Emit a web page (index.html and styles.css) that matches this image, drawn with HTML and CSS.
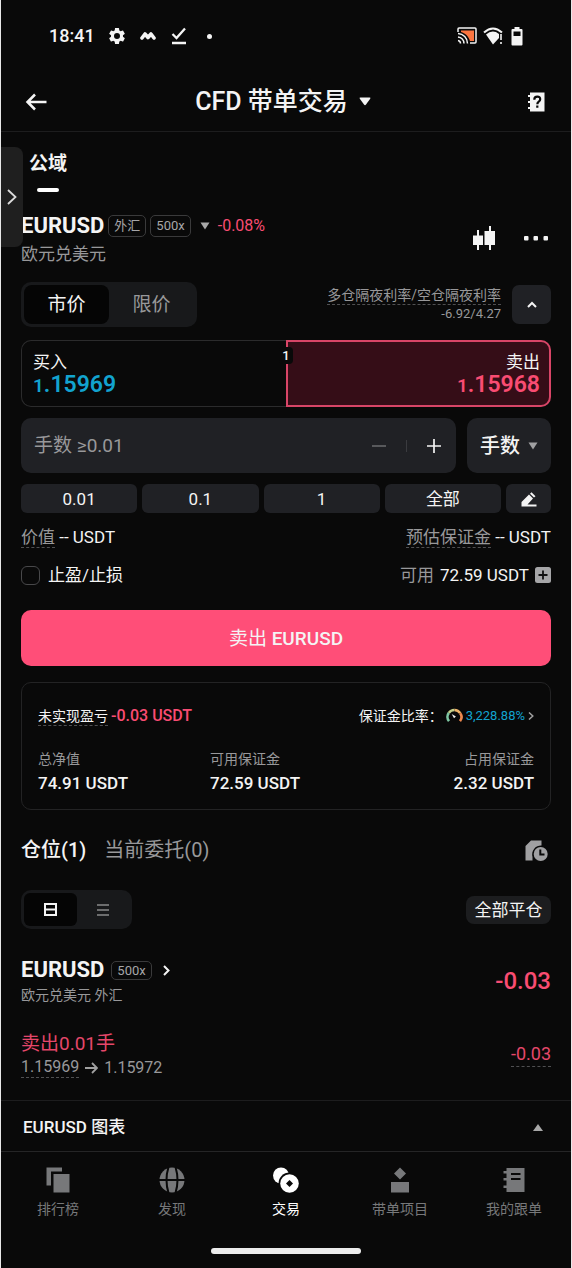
FILE: index.html
```html
<!DOCTYPE html>
<html lang="zh-CN">
<head>
<meta charset="utf-8">
<meta name="viewport" content="width=device-width, initial-scale=1">
<title>CFD 带单交易</title>
<link rel="stylesheet" href="styles.css">
</head>
<body>
<div class="app">
  <div class="status">
    <span class="clock">18:41</span>
    <svg class="st-gear" width="20" height="20" viewBox="0 0 24 24" fill="#f4f4f4"><path d="M19.14 12.94c.04-.3.06-.61.06-.94 0-.32-.02-.64-.07-.94l2.03-1.58a.49.49 0 0 0 .12-.61l-1.92-3.32a.49.49 0 0 0-.59-.22l-2.39.96c-.5-.38-1.03-.7-1.62-.94l-.36-2.54a.48.48 0 0 0-.48-.41h-3.84c-.24 0-.43.17-.47.41l-.36 2.54c-.59.24-1.13.57-1.62.94l-2.39-.96c-.22-.08-.47 0-.59.22L2.74 8.87c-.12.21-.08.47.12.61l2.03 1.58c-.05.3-.09.63-.09.94s.02.64.07.94l-2.03 1.58a.49.49 0 0 0-.12.61l1.92 3.32c.12.22.37.29.59.22l2.39-.96c.5.38 1.03.7 1.62.94l.36 2.54c.05.24.24.41.48.41h3.84c.24 0 .44-.17.47-.41l.36-2.54c.59-.24 1.13-.56 1.62-.94l2.39.96c.22.08.47 0 .59-.22l1.92-3.32c.12-.22.07-.47-.12-.61l-2.01-1.58zM12 15.6A3.6 3.6 0 1 1 12 8.400a3.600 3.600 0 0 1 0 7.200z"/></svg>
    <svg class="st-wave" width="16" height="10" viewBox="0 0 16 10" fill="none" stroke="#f4f4f4" stroke-width="3.600" stroke-linejoin="round" stroke-linecap="round"><path d="M2 7 5 3 8 6.500 11 3 14 7"/></svg>
    <svg class="st-done" width="16" height="18" viewBox="0 0 16 18" fill="none" stroke="#f4f4f4" stroke-width="2.300"><path d="M1.500 7 5.500 11 14 1.500M1 16H15"/></svg>
    <span class="dot"></span>
    <span class="fill"></span>
    <svg class="st-cast" width="20" height="18" viewBox="0 0 20 18" fill="none" stroke="#f4f4f4" stroke-width="1.500"><path d="M4 3.500H17V14H13C11.500 9 8 6 4 5z" fill="#fb7540" stroke="none"/><path d="M1 5V2Q1 1 2 1H18Q19 1 19 2V15Q19 16 18 16H13"/><path d="M1 6.500A10 10 0 0 1 10.500 16.500M1 10A6.500 6.500 0 0 1 7 16.500M1 13.500A3 3 0 0 1 3.500 16.500" stroke-width="1.500"/></svg>
    <svg class="st-wifi" width="20" height="18" viewBox="0 0 20 18"><path d="M1 5.500Q10-2.500 19 5.500" fill="none" stroke="#f4f4f4" stroke-width="2"/><path d="M3 7.500Q9.500 2 16 7V11L10 17.500z" fill="#f4f4f4"/><path d="M18 7V13M18 15V17" stroke="#f4f4f4" stroke-width="1.600"/></svg>
    <svg width="12" height="19" viewBox="0 0 12 19"><path d="M3.500 0h5v2H10.500Q11.500 2 11.500 3V17.500Q11.500 18.500 10.500 18.500H1.500Q.5 18.500.5 17.500V3Q.5 2 1.500 2H3.500zM2.500 4.500V9H9.500V4.500z" fill="#f4f4f4" fill-rule="evenodd"/></svg>
  </div>

  <header class="header">
    <button class="icon-btn" aria-label="返回"><svg width="22" height="18" viewBox="0 0 22 18" fill="none" stroke="#f4f4f4" stroke-width="2.500"><path d="M21.500 9H3M10 1.500 2.500 9 10 16.500"/></svg></button>
    <button class="title"><span>CFD 带单交易</span><svg width="12" height="9" viewBox="0 0 12 9" fill="#f4f4f4"><path d="M1.500.5h9q1.500 0 .7 1.200L7 7.500Q6 8.800 5 7.500L.8 1.700Q0 .5 1.500.5z"/></svg></button>
    <button class="icon-btn end" aria-label="帮助"><svg width="18" height="20" viewBox="0 0 18 20"><path d="M3 .5H17.500V19.500H3V17H1V15H3V11H1V9H3V5H1V3H3z" fill="#f4f4f4"/><path d="M7.300 7.700Q7.300 4.600 10.300 4.600T13.200 7.300Q13.200 8.700 11.700 9.700 10.300 10.500 10.300 12.300M10.300 13.500V15.800" fill="none" stroke="#090909" stroke-width="2.200"/></svg></button>
  </header>

  <button class="drawer" aria-label="展开"><svg width="10" height="16" viewBox="0 0 10 16" fill="none" stroke="#dcdcdc" stroke-width="1.800"><path d="M1 1 8.500 8 1 15"/></svg></button>

  <main class="content">
    <nav class="zone"><a href="#" class="zone-tab">公域</a></nav>

    <section class="symbol">
      <div>
        <div class="symbol-line">
          <h1 class="pair">EURUSD</h1>
          <span class="tag">外汇</span><span class="tag">500x</span>
          <svg class="sym-caret" width="10" height="8" viewBox="0 0 10 8" fill="#a8a8a8"><path d="M.5.5h9L5 7.500z"/></svg>
          <span class="change">-0.08%</span>
        </div>
        <p class="pair-name">欧元兑美元</p>
      </div>
      <div class="symbol-actions">
        <button class="icon-btn" aria-label="K线"><svg width="22" height="24" viewBox="0 0 22 24" fill="#f4f4f4"><path d="M0 9.500h4V4h2v5.500h4V19H6v5H4v-5H0zM11.500 5H16V0h2v5h4v14H18v5h-2v-5H11.500z"/></svg></button>
        <button class="icon-btn" aria-label="更多"><svg width="26" height="6" viewBox="0 0 26 6" fill="#f4f4f4"><rect x="1" y="1" width="4.500" height="4.500" rx="1"/><rect x="10.500" y="1" width="4.500" height="4.500" rx="1"/><rect x="20.500" y="1" width="4.500" height="4.500" rx="1"/></svg></button>
      </div>
    </section>

    <section class="mode">
      <div class="segment">
        <button class="seg on">市价</button><button class="seg">限价</button>
      </div>
      <div class="rates"><span class="hint">多仓隔夜利率/空仓隔夜利率</span><span>-6.92/4.27</span></div>
      <button class="collapse" aria-label="收起"><svg width="10" height="7" viewBox="0 0 10 7" fill="none" stroke="#f4f4f4" stroke-width="2"><path d="M1 6 5 2 9 6"/></svg></button>
    </section>

    <section class="quotes">
      <button class="quote buy"><span>买入</span><span class="price"><small>1</small>.15969</span></button>
      <button class="quote sell"><span>卖出</span><span class="price"><small>1</small>.15968</span></button>
      <span class="spread">1</span>
    </section>

    <section class="amount">
      <div class="field">
        <input class="lots" type="text" aria-label="手数" placeholder="手数 ≥0.01">
        <button class="step" aria-label="减少"><svg width="14" height="14" viewBox="0 0 14 14" stroke="#6b6c6f" stroke-width="1.500"><path d="M0 7H14"/></svg></button>
        <span class="bar"></span>
        <button class="step" aria-label="增加"><svg width="14" height="14" viewBox="0 0 14 14" stroke="#f4f4f4" stroke-width="1.700"><path d="M0 7H14M7 0V14"/></svg></button>
      </div>
      <div class="unit">
        <select aria-label="单位"><option>手数</option></select>
        <svg width="10" height="8" viewBox="0 0 10 8" fill="#a0a0a2"><path d="M.5.5h9L5 7.500z"/></svg>
      </div>
    </section>

    <section class="presets">
      <button>0.01</button><button>0.1</button><button>1</button><button>全部</button>
      <button class="edit" aria-label="编辑"><svg width="16" height="15" viewBox="0 0 16 15" fill="#f4f4f4"><path d="M.5 14.500V10L8 2.500 12 6.500 6.500 12.500H15.500V14.500zM9 1.700 10.500.3 14.500 4.200 13 5.600z"/></svg></button>
    </section>

    <section class="line value-line">
      <p><span class="hint muted">价值</span> -- USDT</p>
      <p><span class="hint muted">预估保证金</span> -- USDT</p>
    </section>
    <section class="line avail-line">
      <label class="check"><input type="checkbox"><span>止盈/止损</span></label>
      <p class="avail"><span class="muted">可用</span><span>72.59 USDT</span><button class="icon-btn" aria-label="充值"><svg width="16" height="16" viewBox="0 0 16 16"><rect width="16" height="16" rx="2.500" fill="#a6a6a8"/><path d="M8 3.500V12.500M3.500 8H12.500" stroke="#111" stroke-width="1.800"/></svg></button></p>
    </section>

    <button class="submit">卖出 <b>EURUSD</b></button>

    <section class="card">
      <div class="card-top">
        <p class="pnl"><span class="hint">未实现盈亏</span><strong>-0.03 USDT</strong></p>
        <a href="#" class="ratio"><span>保证金比率：</span>
          <svg width="17" height="16" viewBox="0 0 18 16" fill="none" stroke-width="2.800"><path d="M3.200 13.500A7 7 0 0 1 3 4.700" stroke="#7fc8a4"/><path d="M3 4.700A7 7 0 0 1 9 1.600" stroke="#c5d08a"/><path d="M9 1.600A7 7 0 0 1 15 5" stroke="#eeb36a"/><path d="M15 5A7 7 0 0 1 14.800 13.500" stroke="#f0884e"/><path d="M6 6 10.500 8.500 8.500 10.500z" fill="#eee"/></svg>
          <span class="blue">3,228.88%</span>
          <svg width="6" height="8" viewBox="0 0 6 8" fill="none" stroke="#a0a0a0" stroke-width="1.500"><path d="M1 .5 4.800 4 1 7.500"/></svg></a>
      </div>
      <dl class="stats">
        <div><dt>总净值</dt><dd>74.91 USDT</dd></div>
        <div><dt>可用保证金</dt><dd>72.59 USDT</dd></div>
        <div><dt>占用保证金</dt><dd>2.32 USDT</dd></div>
      </dl>
    </section>

    <nav class="tabs">
      <a href="#" class="tab on">仓位(1)</a><a href="#" class="tab">当前委托(0)</a>
      <span class="fill"></span>
      <button class="icon-btn history" aria-label="历史"><svg width="23" height="21" viewBox="0 0 23 21"><path d="M.5 20.500V6L6 .5H16.500V5.500A9 9 0 0 0 7.500 17V20.500z" fill="#a0a0a2"/><circle cx="15.700" cy="14" r="7" fill="#a0a0a2"/><path d="M15.300 9.500V14.500H19.500" fill="none" stroke="#090909" stroke-width="2"/></svg></button>
    </nav>

    <section class="tools">
      <div class="segment small">
        <button class="seg on" aria-label="卡片"><svg width="13" height="13" viewBox="0 0 13 13" fill="none" stroke="#f4f4f4" stroke-width="2"><path d="M1 1H12V12H1zM1 6.500H12"/></svg></button>
        <button class="seg" aria-label="列表"><svg width="12" height="12" viewBox="0 0 12 12" stroke="#88898b" stroke-width="1.500"><path d="M0 1H12M0 6H12M0 11H12"/></svg></button>
      </div>
      <button class="close-all">全部平仓</button>
    </section>

    <article class="position">
      <div class="pos-row">
        <div>
          <div class="symbol-line"><h2 class="pair">EURUSD</h2><span class="tag low">500x</span><svg class="pos-go" width="7" height="11" viewBox="0 0 7 11" fill="none" stroke="#f4f4f4" stroke-width="2"><path d="M1 1 5.500 5.500 1 10"/></svg></div>
          <p class="pos-name">欧元兑美元 外汇</p>
        </div>
        <strong class="total">-0.03</strong>
      </div>
      <div class="pos-row fills">
        <div>
          <p class="side">卖出0.01手</p>
          <p class="path"><span class="hint">1.15969</span><svg width="13" height="12" viewBox="0 0 13 12" fill="none" stroke="#a0a0a0" stroke-width="1.800"><path d="M0 6H12M7 1 12 6 7 11"/></svg><span>1.15972</span></p>
        </div>
        <span class="hint part">-0.03</span>
      </div>
    </article>
  </main>

  <button class="chart"><span>EURUSD 图表</span><svg width="10" height="7" viewBox="0 0 10 7" fill="#a8a8a8"><path d="M0 7 5 0 10 7z"/></svg></button>

  <nav class="dock">
    <a href="#"><svg width="24" height="26" viewBox="0 0 24 26" fill="currentColor"><path d="M.5.500H16V4.500H5V18.500H.5zM7.500 7H23.500V25.500H7.500z"/></svg><span>排行榜</span></a>
    <a href="#"><svg width="26" height="26" viewBox="0 0 26 26"><circle cx="13" cy="13" r="12.500" fill="currentColor"/><path d="M0 13H26M9.500 0Q5.500 13 9.500 26M16.500 0Q20.500 13 16.500 26" fill="none" stroke="#090909" stroke-width="2"/></svg><span>发现</span></a>
    <a href="#" class="on"><svg width="28" height="26" viewBox="0 0 28 26"><circle cx="9" cy="8.500" r="8" fill="currentColor"/><circle cx="17.500" cy="16.500" r="11" fill="#090909"/><circle cx="17.500" cy="16.500" r="9.300" fill="currentColor"/><path d="M17.500 13 21 16.500 17.500 20 14 16.500z" fill="#090909"/></svg><span>交易</span></a>
    <a href="#"><svg width="20" height="26" viewBox="0 0 20 26" fill="currentColor"><path d="M10 .5 16 6.500 10 12.500 4 6.500zM1 15H19V25.500H1z"/></svg><span>带单项目</span></a>
    <a href="#"><svg width="22" height="26" viewBox="0 0 22 26"><path d="M3.500 1H21.500V25H3.500V21H.5V18.500H3.500V13.500H.5V11H3.500V6.500H.5V4H3.500z" fill="currentColor"/><path d="M8 7H17.500M8 12H17.500" stroke="#090909" stroke-width="2.200"/></svg><span>我的跟单</span></a>
  </nav>
  <div class="home"></div>
</div>
</body>
</html>
```
FILE: styles.css
```css
:root {
  --bg: #090909;
  --panel: #202125;
  --line: #1d1d1e;
  --text: #f4f4f4;
  --muted: #98989a;
  --red: #f94c72;
  --blue: #12a3cf;
}

* { box-sizing: border-box; }

body, h1, h2, p, dl, dd { margin: 0; }

body {
  background: var(--bg);
  color: var(--text);
  font: 17px/24px Roboto, "Noto Sans CJK SC", sans-serif;
}

button, input, select {
  margin: 0;
  padding: 0;
  border: 0;
  background: none;
  color: inherit;
  font: inherit;
}

a { color: inherit; text-decoration: none; }
svg { display: block; flex: none; }

.app {
  position: relative;
  display: flex;
  flex-direction: column;
  min-height: 100vh;
  border: solid #e8e8e8;
  border-width: 0 1px;
}

.fill { flex: 1; }
.muted { color: var(--muted); }
.blue { color: var(--blue); font-size: 13px; }
.icon-btn { display: flex; }
.hint { border-bottom: 1px dashed #505052; }

/* Status bar */
.status {
  display: flex;
  align-items: center;
  height: 70px;
  padding: 2px 48px 0;
}
.clock { font-size: 18px; font-weight: 500; }
.st-gear { margin-left: 12px; }
.st-wave { margin-left: 13px; }
.st-done { margin-left: 15px; }
.dot { width: 5px; height: 5px; margin-left: 20px; border-radius: 50%; background: var(--text); }
.st-wifi { margin: 0 8px 0 6px; }

/* Header */
.header {
  display: grid;
  grid-template-columns: 48px 1fr 48px;
  align-items: center;
  height: 62px;
  padding: 2px 11px 0 24px;
  border-bottom: 1px solid var(--line);
}
.header .end { justify-self: center; }
.title {
  display: flex;
  align-items: center;
  justify-content: center;
  gap: 11px;
  padding-right: 19px;
  font-size: 25px;
  font-weight: 500;
  line-height: 32px;
}

.drawer {
  position: absolute;
  top: 147px;
  left: 0;
  display: flex;
  align-items: center;
  justify-content: center;
  width: 22px;
  height: 100px;
  border-radius: 0 8px 8px 0;
  background: #1f1f1f;
}

.content { padding: 0 20px; }

.zone { display: flex; padding: 20px 8px 0; }
.zone-tab {
  display: flex;
  flex-direction: column;
  align-items: center;
  font-size: 19px;
  font-weight: 700;
}
.zone-tab::after {
  content: "";
  width: 22px;
  height: 4px;
  margin-top: 12px;
  border-radius: 2px;
  background: #fff;
}

/* Symbol */
.symbol {
  display: flex;
  justify-content: space-between;
  margin-top: 20px;
}
.symbol-line { display: flex; align-items: center; height: 28px; }
.pair { font-size: 22px; font-weight: 700; line-height: 28px; }
.tag {
  margin-left: 4px;
  padding: 0 5px;
  border: 1px solid #3a3a3b;
  border-radius: 5px;
  color: #a6a6a8;
  font-size: 13px;
  line-height: 20px;
}
.sym-caret { margin: 0 8px 0 9px; }
.change { color: var(--red); font-size: 16px; }
.pair-name { margin-top: 2px; color: var(--muted); line-height: 24px; }
.symbol-actions { display: flex; align-items: center; gap: 28px; padding: 0 2px 2px 0; }

/* Order type */
.mode { display: flex; align-items: center; margin-top: 16px; }
.segment {
  display: flex;
  width: 176px;
  height: 45px;
  padding: 3px;
  border-radius: 10px;
  background: #18191b;
}
.seg {
  display: flex;
  flex: 1;
  align-items: center;
  justify-content: center;
  border-radius: 8px;
  color: var(--muted);
  font-size: 19px;
}
.seg.on { background: #050505; color: var(--text); }
.rates {
  display: flex;
  flex: 1;
  flex-direction: column;
  align-items: flex-end;
  color: var(--muted);
  font-size: 14px;
  line-height: 18px;
}
.rates span:last-child { font-size: 13px; }
.collapse {
  display: flex;
  align-items: center;
  justify-content: center;
  width: 39px;
  height: 39px;
  margin-left: 11px;
  border-radius: 7px;
  background: var(--panel);
}

/* Buy and sell prices */
.quotes {
  position: relative;
  display: grid;
  grid-template-columns: 1fr 1fr;
  height: 67px;
  margin-top: 13px;
}
.quote {
  display: flex;
  flex-direction: column;
  justify-content: center;
  padding: 0 11px;
  border: 1px solid #2b2b2c;
  line-height: 22px;
  text-align: left;
}
.buy { border-right: 0; border-radius: 10px 0 0 10px; }
.sell {
  align-items: flex-end;
  padding: 0 9px;
  border: 2px solid #d84567;
  border-radius: 0 10px 10px 0;
  background: #350d17;
}
.price { color: var(--blue); font-size: 23px; font-weight: 600; line-height: 23px; }
.price small { font-size: 19px; }
.sell .price { color: var(--red); }
.spread {
  position: absolute;
  top: 7px;
  left: 50%;
  width: 14px;
  margin-left: -7px;
  border-radius: 4px;
  background: var(--bg);
  font-size: 13px;
  font-weight: 500;
  line-height: 17px;
  text-align: center;
}

/* Amount */
.amount { display: flex; gap: 11px; height: 55px; margin-top: 11px; }
.field {
  display: flex;
  flex: 1;
  align-items: center;
  padding: 0 7px 0 13px;
  border-radius: 10px;
  background: var(--panel);
}
.lots { flex: 1; min-width: 0; height: 32px; font-size: 19px; outline: 0; }
.lots::placeholder { color: var(--muted); opacity: 1; }
.step { display: flex; justify-content: center; width: 30px; }
.bar { width: 1px; height: 12px; margin: 0 12px; background: #3a3b3f; }
.unit {
  position: relative;
  display: flex;
  align-items: center;
  width: 84px;
  padding: 0 13px;
  border-radius: 10px;
  background: var(--panel);
}
.unit select { flex: 1; appearance: none; font-size: 20px; font-weight: 500; outline: 0; }

.presets {
  display: grid;
  grid-template-columns: repeat(4, 1fr) 45px;
  gap: 5px;
  margin-top: 11px;
}
.presets button {
  height: 29px;
  padding-top: 1px;
  border-radius: 6px;
  background: var(--panel);
  line-height: 28px;
}
.presets .edit { display: flex; align-items: center; justify-content: center; }

.line { display: flex; align-items: center; justify-content: space-between; }
.value-line { margin-top: 12px; }
.avail-line { margin-top: 14px; }
.check { display: flex; align-items: center; gap: 8px; }
.check input {
  appearance: none;
  width: 19px;
  height: 19px;
  border: 1px solid #48484a;
  border-radius: 6px;
}
.avail { display: flex; align-items: center; gap: 6px; }

.submit {
  display: block;
  width: 100%;
  height: 56px;
  margin-top: 23px;
  padding-top: 2px;
  border-radius: 10px;
  background: #ff4e78;
  font-size: 19px;
}
.submit b { font-weight: 500; }

/* Account summary */
.card {
  margin-top: 16px;
  padding: 22px 16px 14px;
  border: 1px solid #232324;
  border-radius: 10px;
}
.card-top, .ratio, .pnl { display: flex; align-items: center; }
.card-top { justify-content: space-between; height: 22px; font-size: 14px; line-height: 18px; }
.pnl { gap: 3px; }
.pnl strong { color: var(--red); font-size: 16px; font-weight: 500; }
.ratio { gap: 3px; }
.stats { display: grid; grid-template-columns: 1fr 1fr 1fr; gap: 20px; margin-top: 20px; }
.stats div:last-child { text-align: right; }
.stats dt { color: var(--muted); font-size: 14px; line-height: 24px; }
.stats dd { font-weight: 500; line-height: 24px; }

/* Positions */
.tabs { display: flex; align-items: center; margin-top: 26px; line-height: 28px; font-size: 20px; }
.tab { margin-right: 18px; color: var(--muted); }
.tab.on { color: var(--text); font-weight: 500; }
.history { margin-right: 3px; }
.tools { display: flex; align-items: center; justify-content: space-between; margin-top: 26px; }
.segment.small { width: 111px; height: 39px; }
.small .seg { border-radius: 6px; }
.close-all {
  width: 85px;
  height: 28px;
  padding-top: 1px;
  border-radius: 8px;
  background: #1c1d1f;
  line-height: 27px;
}
.position { margin-top: 27px; }
.pos-row { display: flex; align-items: center; justify-content: space-between; }
.tag.low { margin-left: 7px; line-height: 17px; }
.pos-go { margin-left: 11px; }
.pos-name { color: var(--muted); font-size: 14px; line-height: 22px; }
.total { color: var(--red); font-size: 24px; font-weight: 500; }
.fills { margin-top: 25px; }
.side { color: #e5476a; font-size: 19px; line-height: 26px; }
.path { display: flex; align-items: center; gap: 6px; color: var(--muted); font-size: 16px; line-height: 20px; }
.part { color: #e5476a; font-size: 18px; }

/* Bottom area */
.chart {
  display: flex;
  align-items: center;
  justify-content: space-between;
  height: 51px;
  margin-top: 22px;
  padding: 2px 28px 0 22px;
  border-top: 1px solid var(--line);
  font-weight: 500;
}
.dock {
  display: grid;
  grid-template-columns: repeat(5, 1fr);
  padding-top: 15px;
  border-top: 1px solid #252526;
}
.dock a {
  display: flex;
  flex-direction: column;
  align-items: center;
  gap: 5px;
  color: #77787a;
  font-size: 14px;
  line-height: 22px;
}
.dock .on { color: #fff; }
.home {
  width: 150px;
  height: 6px;
  margin: 28px auto 12px;
  border-radius: 3px;
  background: #ececec;
}
```
